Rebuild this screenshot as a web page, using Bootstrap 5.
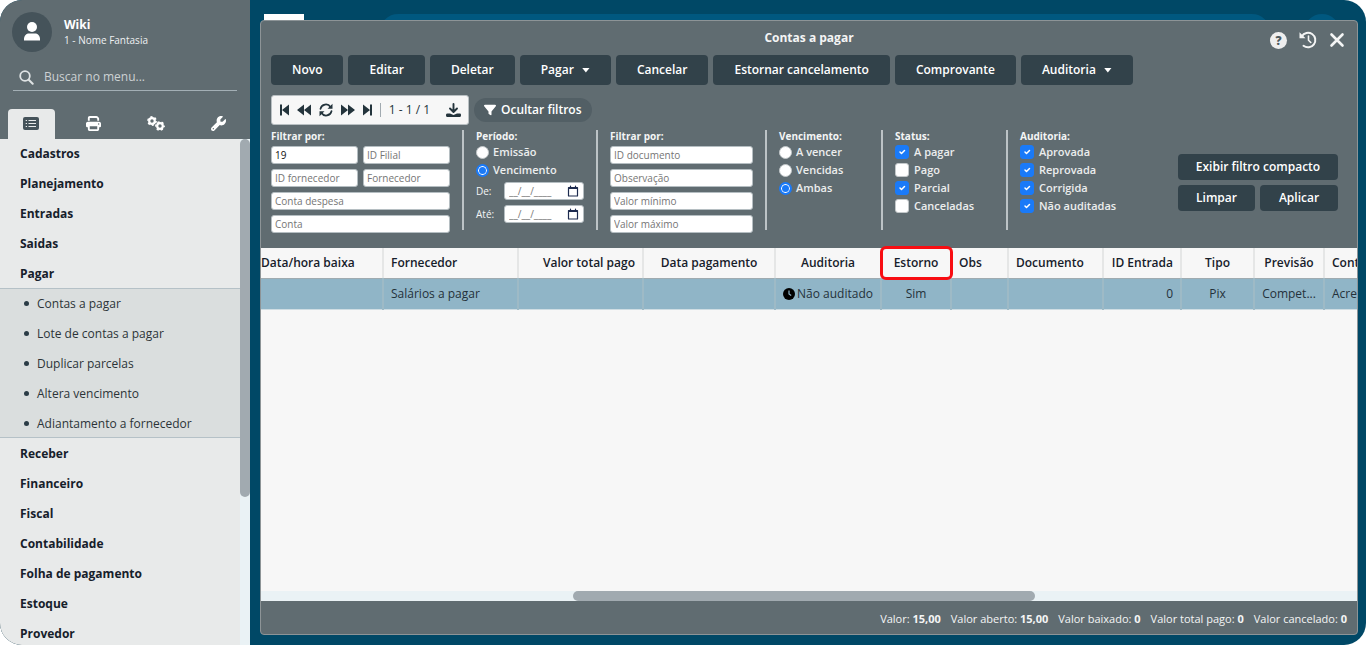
<!DOCTYPE html>
<html lang="pt-BR">
<head>
<meta charset="utf-8">
<meta name="viewport" content="width=device-width, initial-scale=1">
<title>Contas a pagar</title>
<link href="https://cdn.jsdelivr.net/npm/bootstrap@5.3.0/dist/css/bootstrap.min.css" rel="stylesheet">
<style>
:root{--navy:#004866;--slate:#606c71;--ink:#32424a;--paper:#f7f7f7;--track:#eaf2f5;--thumb:#a1aab0}
body{font-family:"Open Sans","Noto Sans",sans-serif;font-size:12px;line-height:18px;background:#fff;color:#16202a}
svg{display:block;fill:currentColor;flex:none}
svg .ln{fill:none;stroke:currentColor;stroke-linecap:round;stroke-linejoin:round}
.app{min-height:100vh;height:100vh;border-radius:22px;background:var(--navy)}
/* side menu */
.side{width:250px;background:var(--slate);color:#fff}
.who{padding:12px 12px 0;gap:12px}
.avatar{width:40px;height:40px;background:#45535a;color:#fff}
.who small{font-size:10px;line-height:14px;color:#eef0f1}
.who strong{font-weight:700;line-height:16px}
.seek{margin:12px 13px 0;padding:1px 6px 0;height:27px;gap:10px;border-bottom:1px solid #a3afb5;color:#dfe3e4}
.seek input{font-size:12px;color:#fff;outline:0;line-height:18px}
.seek input::placeholder{color:#cdd2d4;opacity:1}
.tabs{height:48px;padding-top:18px}
.tabs button{flex:1;border:0;background:none;color:#fff;padding:0 8px}
.tabs span{height:30px;display:flex;align-items:center;justify-content:center}
.tabs .on span{background:#e8eaea;color:#45535a;border-radius:4px 4px 0 0}
.menu{background:#e8eaea}
.menu a{display:flex;align-items:center;height:30px;padding:2px 0 0 20px;font-weight:700;color:#16202a;text-decoration:none}
.menu ul ul a{font-weight:400;padding-left:24px;gap:8px;color:#2c3438}
.menu ul ul a::before{content:"";width:5px;height:5px;border-radius:50%;background:#2b3c46}
.menu>ul>li:first-child>a{height:29px}
.menu ul ul{background:#dadede;box-shadow:inset 0 1px #b5c1c7,inset 0 -1px #b5c1c7}
.vbar{width:10px;background:var(--track)}
.thumb{background:var(--thumb);border-radius:5px}
/* page behind the window */
.peek{height:20px;padding:14px 6px 0 4px}
.peek .logo{width:40px;background:#fff}
.peek .pill{margin:0 34px 0 76px;height:36px;border-radius:18px;background:#00587f}
.peek .dot{width:36px;height:36px;margin-right:12px;border-radius:50%;background:#00587f}
.stage{padding:0 8px 10px 10px}
/* window */
.win{border:1px solid #8d9497;border-radius:4px;background:var(--slate);color:#f4f5f5}
.win header{height:34px;font-weight:700}
.tools{right:12px;top:10px;gap:12px}
.tools button,.pager button{border:0;background:none;padding:0;color:inherit}
.tools .help{width:17px;height:17px;border-radius:50%;background:#eee;color:#4d595e;font-weight:800;font-size:12px;line-height:17px}
.cmd{background:var(--ink);color:#fff;border:0;border-radius:4px;font-size:12px;font-weight:600;line-height:18px;padding:6px 21px}
.cmd:hover{background:#26343b;color:#fff}
.acts{gap:5px;padding:0 10px}
.caret{width:8px;height:5px;margin-left:8px;background:#fff;clip-path:polygon(0 0,100% 0,50% 100%)}
.pagerow{padding:10px 10px 0;gap:5px}
.pager{height:30px;width:198px;padding:0 7px 0 8px;background:var(--paper);border:1px solid #b9c0c3;border-radius:3px;color:#24343c}
.pager .sep{width:1px;height:14px;background:#a1aab0}
.pilled{height:24px;border:0;border-radius:12px;background:#525f65;color:#fff;padding:0 10px;gap:5px;font-weight:600}
/* filters */
.filters{padding:5px 10px 15px;gap:12px}
.rule{width:2px;height:100px;background:#bcc3c6}
.filters fieldset{font-size:11px;line-height:18px}
.filters h2{font-size:10px;line-height:12px;font-weight:700;margin:0 0 4px}
.box{height:18px;border:1px solid #b5bec2;border-radius:3px;background:#fff;padding:0 3px;font-size:10px;line-height:16px;color:#111;min-width:0;width:100%}
.box::placeholder{color:#757575;opacity:1}
.stack{display:grid;gap:5px}
.g1{width:179px;grid-template-columns:1fr 1fr}
.g1 .wide{grid-column:span 2}
.g3{width:143px}
.opt{display:flex;align-items:center;gap:5px;height:18px;font-weight:600;color:#eceeee}
.opt .form-check-input{margin:0;width:14px;height:14px;border:1px solid #c3c8ca;flex:none}
.opt .form-check-input[type=radio]{width:13px;height:13px;margin-right:-1px}
.opt .form-check-input[type=checkbox]{border-radius:3px}
.opt .form-check-input[type=checkbox]:checked{background-color:#1a7af8;border-color:#1a7af8;background-size:10px}
.opt .form-check-input[type=radio]:checked{background:#1a7af8;border:2px solid #1a7af8;box-shadow:inset 0 0 0 1px #fff}
.opts{margin-top:-3px}
.date{font-size:10px;height:18px;margin-top:5px}
.date div{width:80px;background:#fff;border:1px solid #b5bec2;border-radius:3px;height:18px;padding:0 4px;color:#1d2b4f}
.date input{border:0;outline:0;width:56px;padding:0;font-size:10px;line-height:14px;background:none}
.date input::placeholder{color:#777}
.opts+.date{margin-top:3px}
.apply{width:160px;margin:24px 9px 0 auto;display:grid;grid-template-columns:77px 78px;gap:5px}
.apply .cmd{padding:4px 0}
.apply .cmd:first-child{grid-column:span 2}
/* grid */
.sheet{background:var(--paper);overflow-x:clip;overflow-y:visible}
.sheet table{table-layout:fixed;width:1174px;border-collapse:separate;border-spacing:0;margin:0;color:#16202a}
.sheet th,.sheet td{height:30px;padding:0 7px;border:0;border-right:2px solid #e5e6e6;font-size:12px;white-space:nowrap;vertical-align:middle;line-height:18px}
.sheet th{font-weight:600;background:var(--paper);position:relative}
.sheet td{background:#90b5c7;border-right-color:#9ebac6;color:#24313a;height:32px;box-shadow:inset 0 1px #a0abb0,inset 0 -1px #cfdde3}
.sheet th:first-child,.sheet td:first-child{padding-left:0}
.sheet .tight{padding:0}
.tight div{gap:2px}
.hot::after{content:"";position:absolute;inset:-2px -3px -2px -2px;border:3px solid #f80d12;border-radius:6px;z-index:2}
.hbar{height:10px;background:var(--track)}
.totals{height:33px;gap:10px;padding:2px 10px 0;font-size:11px}
.totals b{font-weight:700}
</style>
</head>
<body>
<div class="app d-flex overflow-hidden">
  <aside class="side d-flex flex-column flex-shrink-0">
    <div class="who d-flex align-items-center">
      <div class="avatar rounded-circle d-flex align-items-center justify-content-center">
        <svg width="18" height="20" viewBox="0 0 18 20"><circle cx="9" cy="5" r="5"/><path d="M1 18.500V17c0-3.500 2.500-5.500 5-5.500h6c2.500 0 5 2 5 5.500v1.500z"/></svg>
      </div>
      <div class="d-flex flex-column"><strong>Wiki</strong><small>1 - Nome Fantasia</small></div>
    </div>
    <div class="seek d-flex align-items-center">
      <svg width="15" height="15" viewBox="0 0 15 15"><circle class="ln" cx="6" cy="6" r="4.800" stroke-width="1.800"/><path class="ln" d="M9.700 9.700l4 4" stroke-width="2"/></svg>
      <input class="border-0 bg-transparent p-0 w-100" type="text" placeholder="Buscar no menu..." aria-label="Buscar no menu">
    </div>
    <div class="tabs d-flex">
      <button class="on" type="button" aria-label="Menu"><span>
        <svg width="16" height="13" viewBox="0 0 16 13"><rect width="16" height="13" rx="2"/><path d="M5.500 3.500H13M5.500 6.500H13M5.500 9.500H13M2.700 3.500h1.300M2.700 6.500h1.300M2.700 9.500h1.300" stroke="#e8eaea" stroke-width="1.200"/></svg></span></button>
      <button type="button" aria-label="Imprimir"><span>
        <svg width="15" height="15" viewBox="0 0 512 512"><path d="M128 0C92.700 0 64 28.700 64 64v96h64V64H354.700L384 93.300V160h64V93.300c0-17-6.700-33.300-18.700-45.300L400 18.700C388 6.700 371.700 0 354.700 0H128zM384 352v96H128V352H384zm64 32h32c17.700 0 32-14.300 32-32V256c0-35.300-28.700-64-64-64H64c-35.300 0-64 28.700-64 64v96c0 17.700 14.300 32 32 32H64v64c0 35.300 28.700 64 64 64H384c35.300 0 64-28.700 64-64V384zM432 248a24 24 0 1 1 0 48 24 24 0 1 1 0-48z"/></svg></span></button>
      <button type="button" aria-label="Configurações"><span>
        <svg width="18" height="15" viewBox="0 0 18 15"><g fill="none" stroke="currentColor"><circle cx="5" cy="5" r="2.800" stroke-width="2.200"/><circle cx="5" cy="5" r="4.100" stroke-width="1.600" stroke-dasharray="2.150 2.144"/><circle cx="13" cy="10" r="2.800" stroke-width="2.200"/><circle cx="13" cy="10" r="4.100" stroke-width="1.600" stroke-dasharray="2.150 2.144" stroke-dashoffset="1"/></g></svg></span></button>
      <button type="button" aria-label="Ferramentas"><span>
        <svg width="15" height="15" viewBox="0 0 512 512"><path d="M352 320c88.400 0 160-71.600 160-160c0-15.300-2.200-30.100-6.200-44.200c-3.100-10.800-16.400-13.200-24.300-5.300l-76.800 76.800c-3 3-7.100 4.700-11.300 4.700H336c-8.800 0-16-7.200-16-16V118.600c0-4.200 1.700-8.300 4.700-11.300l76.800-76.800c7.900-7.900 5.400-21.200-5.300-24.300C382.100 2.200 367.300 0 352 0C263.600 0 192 71.600 192 160c0 19.100 3.400 37.500 9.500 54.500L19.900 396.100C7.200 408.800 0 426.100 0 444.100C0 481.600 30.400 512 67.900 512c18 0 35.300-7.200 48-19.900L297.500 310.500c17 6.200 35.400 9.500 54.500 9.500zM80 408a24 24 0 1 1 0 48 24 24 0 1 1 0-48z"/></svg></span></button>
    </div>
    <div class="d-flex flex-grow-1 overflow-hidden">
      <nav class="menu flex-grow-1 overflow-hidden">
        <ul class="list-unstyled m-0">
          <li><a href="#">Cadastros</a></li>
          <li><a href="#">Planejamento</a></li>
          <li><a href="#">Entradas</a></li>
          <li><a href="#">Saidas</a></li>
          <li><a href="#">Pagar</a>
            <ul class="list-unstyled">
              <li><a href="#">Contas a pagar</a></li>
              <li><a href="#">Lote de contas a pagar</a></li>
              <li><a href="#">Duplicar parcelas</a></li>
              <li><a href="#">Altera vencimento</a></li>
              <li><a href="#">Adiantamento a fornecedor</a></li>
            </ul></li>
          <li><a href="#">Receber</a></li>
          <li><a href="#">Financeiro</a></li>
          <li><a href="#">Fiscal</a></li>
          <li><a href="#">Contabilidade</a></li>
          <li><a href="#">Folha de pagamento</a></li>
          <li><a href="#">Estoque</a></li>
          <li><a href="#">Provedor</a></li>
        </ul>
      </nav>
      <div class="vbar"><div class="thumb" style="height:70.700%"></div></div>
    </div>
  </aside>

  <main class="stage flex-grow-1 d-flex flex-column overflow-hidden">
    <div class="peek d-flex overflow-hidden flex-shrink-0"><div class="logo"></div><div class="pill flex-grow-1"></div><div class="dot"></div></div>
    <section class="win flex-grow-1 d-flex flex-column overflow-hidden position-relative">
      <header class="d-flex align-items-center justify-content-center flex-shrink-0">Contas a pagar</header>
      <div class="tools position-absolute d-flex align-items-center">
        <button class="help" type="button" aria-label="Ajuda">?</button>
        <button type="button" aria-label="Histórico"><svg width="18" height="18" viewBox="0 0 18 18"><path class="ln" d="M2.800 5.200A7.300 7.300 0 1 1 4.500 14.800" stroke-width="2"/><path d="M.5 1.200v6h6z"/><path class="ln" d="M9.500 5v4.200l2.300 2.300" stroke-width="1.600"/></svg></button>
        <button type="button" aria-label="Fechar"><svg width="16" height="16" viewBox="0 0 16 16"><path class="ln" d="M2.500 2.500l11 11M13.500 2.500l-11 11" stroke-width="2.600"/></svg></button>
      </div>
      <div class="acts d-flex flex-wrap">
        <button class="btn cmd" type="button">Novo</button>
        <button class="btn cmd" type="button">Editar</button>
        <button class="btn cmd" type="button">Deletar</button>
        <button class="btn cmd d-flex align-items-center" type="button">Pagar<span class="caret"></span></button>
        <button class="btn cmd" type="button">Cancelar</button>
        <button class="btn cmd" type="button">Estornar cancelamento</button>
        <button class="btn cmd" type="button">Comprovante</button>
        <button class="btn cmd d-flex align-items-center" type="button">Auditoria<span class="caret"></span></button>
      </div>
      <div class="pagerow d-flex align-items-center">
        <div class="pager d-flex align-items-center justify-content-between">
          <button type="button" aria-label="Primeira"><svg width="9" height="12" viewBox="0 0 9 12"><path d="M0 .5h2v11H0zM9 .5v11L2 6z"/></svg></button>
          <button type="button" aria-label="Anterior"><svg width="14" height="12" viewBox="0 0 14 12"><path d="M7 .5v11L0 6zM14 .5v11L7 6z"/></svg></button>
          <button type="button" aria-label="Atualizar"><svg width="14" height="14" viewBox="0 0 14 14"><path class="ln" d="M1.500 5.800A5.500 5.500 0 0 1 11.500 4M12.500 8.200A5.500 5.500 0 0 1 2.500 10" stroke-width="1.700"/><path d="M13.500.8v5h-5zM.5 13.200v-5h5z"/></svg></button>
          <button type="button" aria-label="Próxima"><svg width="14" height="12" viewBox="0 0 14 12"><path d="M0 .5v11L7 6zM7 .5v11L14 6z"/></svg></button>
          <button type="button" aria-label="Última"><svg width="9" height="12" viewBox="0 0 9 12"><path d="M7 .5h2v11H7zM0 .5v11L7 6z"/></svg></button>
          <span class="sep"></span>
          <span>1 - 1 / 1</span><span></span>
          <button type="button" aria-label="Baixar"><svg width="15" height="14" viewBox="0 0 15 14"><path class="ln" d="M7.500 1v7.500M4 5.500l3.500 3.500L11 5.500" stroke-width="1.900"/><path d="M1.500 10.500h2.500l3.500 1.500 3.500-1.500h2.500A1.300 1.300 0 0 1 15 11.800v.7A1.500 1.500 0 0 1 13.500 14h-12A1.500 1.500 0 0 1 0 12.500v-.7a1.500 1.500 0 0 1 1.500-1.300z"/></svg></button>
        </div>
        <button class="pilled d-flex align-items-center" type="button"><svg width="12" height="12" viewBox="0 32 512 448"><path d="M3.900 54.900C10.500 40.900 24.500 32 40 32H472c15.500 0 29.500 8.900 36.100 22.900s4.600 30.500-5.200 42.500L320 320.900V448c0 12.100-6.800 23.200-17.700 28.600s-23.800 4.300-33.500-3l-64-48c-8.100-6-12.800-15.500-12.800-25.600V320.900L9 97.300C-.7 85.400-2.800 68.800 3.900 54.900z"/></svg>Ocultar filtros</button>
      </div>

      <form class="filters d-flex align-items-start" onsubmit="return false">
        <fieldset><h2>Filtrar por:</h2>
          <div class="stack g1">
            <input class="box" type="text" value="19" aria-label="ID">
            <input class="box" type="text" placeholder="ID Filial" aria-label="ID Filial">
            <input class="box" type="text" placeholder="ID fornecedor" aria-label="ID fornecedor">
            <input class="box" type="text" placeholder="Fornecedor" aria-label="Fornecedor">
            <input class="box wide" type="text" placeholder="Conta despesa" aria-label="Conta despesa">
            <input class="box wide" type="text" placeholder="Conta" aria-label="Conta">
          </div></fieldset>
        <div class="rule"></div>
        <fieldset style="width:108px"><h2>Período:</h2>
          <div class="opts">
            <label class="opt"><input class="form-check-input" type="radio" name="per">Emissão</label>
            <label class="opt"><input class="form-check-input" type="radio" name="per" checked>Vencimento</label>
          </div>
          <div class="date d-flex justify-content-between align-items-center"><label for="de">De:</label><div class="d-flex align-items-center justify-content-between"><input id="de" type="text" placeholder="__/__/____"><svg width="12" height="12" viewBox="0 0 12 12"><path class="ln" d="M1.500 2.500h9v8.500h-9zM1.500 3.500h9M3.500 1v1.500M8.500 1v1.500" stroke-width="1.200"/></svg></div></div>
          <div class="date d-flex justify-content-between align-items-center"><label for="ate">Até:</label><div class="d-flex align-items-center justify-content-between"><input id="ate" type="text" placeholder="__/__/____"><svg width="12" height="12" viewBox="0 0 12 12"><path class="ln" d="M1.500 2.500h9v8.500h-9zM1.500 3.500h9M3.500 1v1.500M8.500 1v1.500" stroke-width="1.200"/></svg></div></div>
        </fieldset>
        <div class="rule"></div>
        <fieldset><h2>Filtrar por:</h2>
          <div class="stack g3">
            <input class="box" type="text" placeholder="ID documento" aria-label="ID documento">
            <input class="box" type="text" placeholder="Observação" aria-label="Observação">
            <input class="box" type="text" placeholder="Valor mínimo" aria-label="Valor mínimo">
            <input class="box" type="text" placeholder="Valor máximo" aria-label="Valor máximo">
          </div></fieldset>
        <div class="rule"></div>
        <fieldset style="width:90px"><h2>Vencimento:</h2>
          <div class="opts">
            <label class="opt"><input class="form-check-input" type="radio" name="ven">A vencer</label>
            <label class="opt"><input class="form-check-input" type="radio" name="ven">Vencidas</label>
            <label class="opt"><input class="form-check-input" type="radio" name="ven" checked>Ambas</label>
          </div></fieldset>
        <div class="rule"></div>
        <fieldset style="width:99px"><h2>Status:</h2>
          <div class="opts">
            <label class="opt"><input class="form-check-input" type="checkbox" checked>A pagar</label>
            <label class="opt"><input class="form-check-input" type="checkbox">Pago</label>
            <label class="opt"><input class="form-check-input" type="checkbox" checked>Parcial</label>
            <label class="opt"><input class="form-check-input" type="checkbox">Canceladas</label>
          </div></fieldset>
        <div class="rule"></div>
        <fieldset><h2>Auditoria:</h2>
          <div class="opts">
            <label class="opt"><input class="form-check-input" type="checkbox" checked>Aprovada</label>
            <label class="opt"><input class="form-check-input" type="checkbox" checked>Reprovada</label>
            <label class="opt"><input class="form-check-input" type="checkbox" checked>Corrigida</label>
            <label class="opt"><input class="form-check-input" type="checkbox" checked>Não auditadas</label>
          </div></fieldset>
        <div class="apply">
          <button class="btn cmd" type="button">Exibir filtro compacto</button>
          <button class="btn cmd" type="button">Limpar</button>
          <button class="btn cmd" type="submit">Aplicar</button>
        </div>
      </form>

      <div class="sheet flex-grow-1">
        <table class="table">
          <colgroup><col width="123"><col width="135"><col width="125"><col width="132"><col width="106"><col width="70"><col width="57"><col width="95"><col width="78"><col width="73"><col width="70"><col width="110"></colgroup>
          <thead><tr>
            <th>Data/hora baixa</th><th>Fornecedor</th><th class="text-end">Valor total pago</th><th class="text-center">Data pagamento</th><th class="text-center">Auditoria</th><th class="text-center hot">Estorno</th><th>Obs</th><th>Documento</th><th class="text-end">ID Entrada</th><th class="text-center">Tipo</th><th class="text-center">Previsão</th><th>Conta</th>
          </tr></thead>
          <tbody><tr>
            <td></td><td>Salários a pagar</td><td></td><td></td>
            <td class="tight"><div class="d-flex align-items-center justify-content-center"><svg class="text-black" width="12" height="12" viewBox="0 0 12 12"><circle cx="6" cy="6" r="6"/><path d="M6 2.500V6l2.200 1.500" fill="none" stroke="#90b5c7" stroke-width="1.200"/></svg>Não auditado</div></td>
            <td class="text-center">Sim</td><td></td><td></td><td class="text-end">0</td><td class="text-center">Pix</td><td class="text-center">Compet...</td><td>Acre</td>
          </tr></tbody>
        </table>
      </div>
      <div class="hbar d-flex flex-shrink-0"><div class="thumb" style="margin-left:28.500%;width:42.100%"></div></div>
      <footer class="totals d-flex align-items-center justify-content-end flex-shrink-0">
        <span>Valor: <b>15,00</b></span><span>Valor aberto: <b>15,00</b></span><span>Valor baixado: <b>0</b></span><span>Valor total pago: <b>0</b></span><span>Valor cancelado: <b>0</b></span>
      </footer>
    </section>
  </main>
</div>
<script src="https://cdn.jsdelivr.net/npm/bootstrap@5.3.0/dist/js/bootstrap.bundle.min.js"></script>
</body>
</html>
